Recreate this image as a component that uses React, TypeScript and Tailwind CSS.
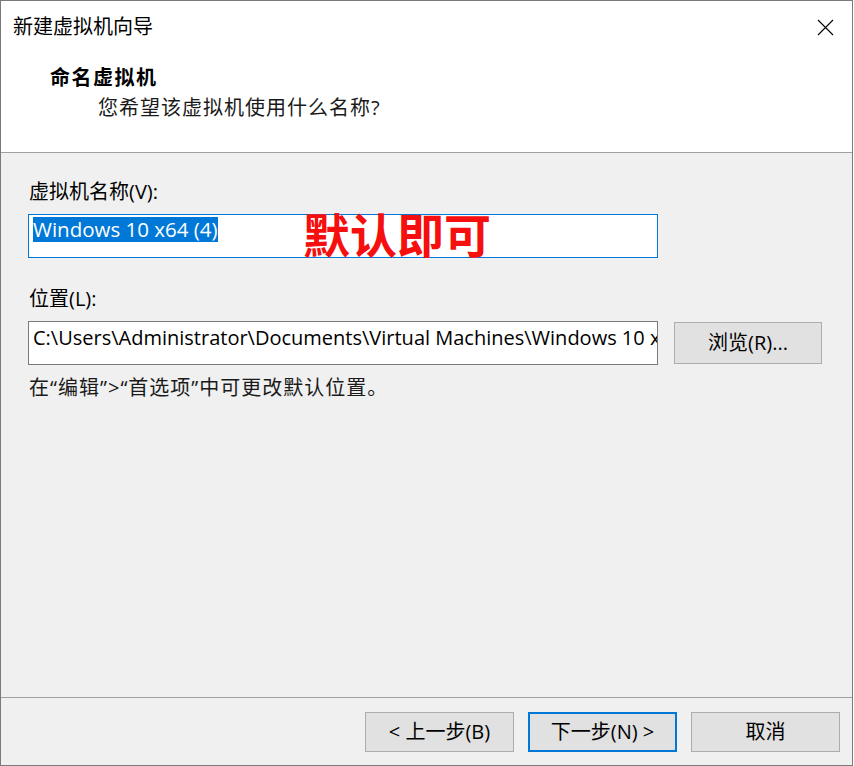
import React from 'react'

const font = { fontFamily: '"Open Sans", "Noto Sans CJK SC", sans-serif' }
const cjk = { fontFamily: '"Noto Sans CJK SC", sans-serif' }

const Btn: React.FC<{ label: string; primary?: boolean }> = ({ label, primary }) => (
    <div
        className={
            'w-[149px] h-[40px] flex items-center justify-center bg-[#e1e1e1] text-[20px] text-black ' +
            (primary ? 'border-2 border-[#0078d7]' : 'border border-[#adadad]')
        }
    >
        {label}
    </div>
)

export default function App() {
    return (
        <div style={font} className="w-[853px] h-[766px] border border-[#7a7a7a] flex flex-col bg-[#f0f0f0] text-black overflow-hidden">
            {/* header */}
            <div className="h-[152px] shrink-0 bg-white border-b border-[#a0a0a0] relative">
                <div className="pl-[12px] pt-[12px] text-[20px] leading-[28px]">新建虚拟机向导</div>
                <svg className="absolute left-[816px] top-[18px]" width="17" height="17" viewBox="0 0 17 17">
                    <path d="M1 1 L16 16 M16 1 L1 16" stroke="#000" strokeWidth="1.1" fill="none" />
                </svg>
                <div className="pl-[49px] pt-[23px] text-[20px] leading-[28px] font-bold tracking-[1.5px]">命名虚拟机</div>
                <div className="pl-[97px] pt-[2px] text-[20px] leading-[28px] tracking-[1px] text-[#1a1a1a]">您希望该虚拟机使用什么名称?</div>
            </div>

            {/* body */}
            <div className="flex-1 pl-[27px] pt-[25px] text-[20px]">
                <div className="leading-[28px] pl-[1px]">虚拟机名称(V):</div>
                <div className="relative mt-[8px] w-[630px] h-[44px] bg-white border border-[#0078d7] flex items-start pt-[2px] pl-[4px]">
                    <span className="bg-[#0078d7] text-white text-[20.5px] leading-[25px]">Windows 10 x64 (4)</span>
                    <span className="absolute left-[274px] top-[-8px] text-[47px] leading-[52px] font-bold text-[#f50f0f]" style={cjk}>
                        默认即可
                    </span>
                </div>

                <div className="leading-[28px] mt-[27px] pl-[1px]">位置(L):</div>
                <div className="mt-[8px] flex items-center gap-[16px]">
                    <div className="w-[630px] h-[44px] shrink-0 bg-white border border-[#7a7a7a] pt-[2px] pl-[4px] overflow-hidden whitespace-nowrap text-[20px] leading-[28px]">
                        C:\Users\Administrator\Documents\Virtual Machines\Windows 10 x64 (4)
                    </div>
                    <div className="w-[148px] h-[42px] bg-[#e1e1e1] border border-[#adadad] flex items-center justify-center">
                        浏览(R)...
                    </div>
                </div>
                <div className="leading-[28px] mt-[9px] pl-[1px] tracking-[1px] text-[#1a1a1a]">在“编辑”&gt;“首选项”中可更改默认位置。</div>
            </div>

            {/* footer */}
            <div className="h-[68px] shrink-0 border-t border-[#a0a0a0] flex justify-end items-start pt-[14px] pr-[12px] gap-[14px]">
                <Btn label="< 上一步(B)" />
                <Btn label="下一步(N) >" primary />
                <Btn label="取消" />
            </div>
        </div>
    )
}
